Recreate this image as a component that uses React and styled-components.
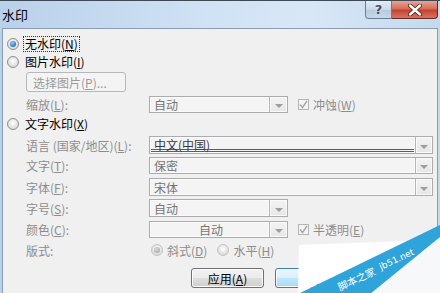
import React from 'react'
import styled, { createGlobalStyle } from 'styled-components'

const Global = createGlobalStyle`
  html, body { margin: 0; padding: 0; background: #ffffff; }
  body { font-family: "Noto Sans CJK SC", "Noto Sans", sans-serif; }
`

const Window = styled.div`
  position: relative;
  width: 440px;
  height: 293px;
  overflow: hidden;
  box-sizing: border-box;
  display: flex;
  flex-direction: column;
  border-top: 1px solid #3c4a58;
  background: linear-gradient(to right, #b9d1ea 0%, #cfe1f3 45%, #d8e7f5 70%, #c4d9ee 100%);
`

const TitleBar = styled.div`
  height: 27px;
  display: flex;
  align-items: flex-start;
  padding-left: 2px;
`

const Title = styled.span`
  margin-top: 6px;
  font-size: 13px;
  line-height: 15px;
  color: #000;
`

const Caption = styled.div`
  margin-left: auto;
  margin-right: 2px;
  display: flex;
`

const HelpButton = styled.div`
  width: 27px;
  height: 18px;
  box-sizing: border-box;
  border: 1px solid #6c7d90;
  border-top: none;
  border-radius: 0 0 0 4px;
  background: linear-gradient(#e4edf6, #c9d9e8 50%, #b6cadd 51%, #c7d8e8);
  display: flex;
  align-items: center;
  justify-content: center;
  font: bold 13px "DejaVu Sans", sans-serif;
  color: #3d4f63;
  text-shadow: 0 0 2px #fff;
`

const CloseButton = styled.div`
  width: 46px;
  height: 18px;
  box-sizing: border-box;
  border: 1px solid #5e2b22;
  border-top: none;
  border-left: none;
  border-radius: 0 0 4px 0;
  background: linear-gradient(#e8a593, #d46a56 48%, #c2412d 52%, #d9735f);
  display: flex;
  align-items: center;
  justify-content: center;
`

const Client = styled.div`
  flex: 1;
  margin: 0 2px;
  box-sizing: border-box;
  background: #f0f0f0;
  border: 1px solid #8b9cb0;
  border-bottom: none;
  padding: 7px 0 0 4px;
  display: flex;
  flex-direction: column;
  font-size: 12px;
  color: #000;
`

const RadioLine = styled.div`
  display: flex;
  align-items: center;
  height: 16px;
  margin-top: ${p => p.$mt || 0}px;
`

const Radio = styled.span`
  width: 12px;
  height: 12px;
  box-sizing: border-box;
  border-radius: 50%;
  border: 1px solid ${p => (p.$disabled ? '#c4c4c4' : '#8e8f8f')};
  background: radial-gradient(circle at 50% 40%, #ffffff, #dcdcdc 70%, #e9e9e9);
  margin-right: 4px;
  display: flex;
  align-items: center;
  justify-content: center;
  flex-shrink: 0;
  &::after {
    content: '';
    display: ${p => (p.$checked ? 'block' : 'none')};
    width: 6px;
    height: 6px;
    border-radius: 50%;
    background: ${p =>
      p.$disabled
        ? 'radial-gradient(circle at 40% 35%, #dcdcdc, #9a9a9a)'
        : 'radial-gradient(circle at 40% 35%, #8fd0f5, #1d69b1 80%)'};
  }
`

const Label = styled.span`
  color: ${p => (p.$disabled ? '#8d8d8d' : '#000')};
  line-height: 14px;
  white-space: nowrap;
  padding: 0 1px;
  border: 1px ${p => (p.$focus ? 'dotted #333' : 'solid transparent')};
`

const PushButton = styled.div`
  margin-top: ${p => p.$mt || 0}px;
  margin-left: ${p => p.$ml || 0}px;
  width: ${p => p.$w}px;
  height: ${p => p.$h || 20}px;
  box-sizing: border-box;
  border: 1px solid ${p => (p.$default ? '#3c7fb1' : p.$disabled ? '#b8b8b8' : '#707070')};
  border-radius: 3px;
  background: ${p =>
    p.$disabled
      ? '#f4f4f4'
      : p.$default
      ? 'linear-gradient(#eaf6fd, #d9f0fc 50%, #bee6fd 51%, #a7d9f5)'
      : 'linear-gradient(#f2f2f2, #ebebeb 50%, #dddddd 51%, #cfcfcf)'};
  box-shadow: inset 0 0 0 1px ${p => (p.$disabled ? '#f4f4f4' : '#fcfcfc')};
  display: flex;
  align-items: center;
  justify-content: ${p => (p.$left ? 'flex-start' : 'center')};
  padding-left: ${p => (p.$left ? 6 : 0)}px;
  color: ${p => (p.$disabled ? '#9a9a9a' : '#000')};
  white-space: nowrap;
  flex-shrink: 0;
`

const FieldRow = styled.div`
  display: flex;
  align-items: center;
  height: ${p => p.$h || 17}px;
  margin-top: ${p => p.$mt || 0}px;
  padding-left: 19px;
`

const FieldLabel = styled.span`
  width: 123px;
  flex-shrink: 0;
  color: #8d8d8d;
  white-space: nowrap;
`

const Combo = styled.div`
  width: ${p => p.$w}px;
  height: 100%;
  box-sizing: border-box;
  border: 1px solid #acacac;
  display: flex;
  flex-shrink: 0;
  background: #f4f4f4;
`

const ComboText = styled.div`
  flex: 1;
  box-sizing: border-box;
  border: 1px solid #fbfbfb;
  display: flex;
  align-items: ${p => (p.$underline ? 'flex-start' : 'center')};
  justify-content: ${p => (p.$center ? 'center' : 'flex-start')};
  padding-left: 3px;
  line-height: 13px;
  color: ${p => (p.$dark ? '#3a3a3a' : '#747474')};
  white-space: nowrap;
  box-shadow: ${p =>
    p.$underline ? 'inset 0 -1px 0 #5e5e5e, inset 0 -2px 0 #f4f4f4, inset 0 -3px 0 #5e5e5e' : 'none'};
`

const DropButton = styled.div`
  width: ${p => p.$w || 17}px;
  flex-shrink: 0;
  box-sizing: border-box;
  border-left: 1px solid #b4b4b4;
  background: linear-gradient(#f3f3f3, #e6e6e6);
  box-shadow: inset 0 0 0 1px #fafafa;
  display: flex;
  align-items: center;
  justify-content: center;
  &::after {
    content: '';
    margin-top: 3px;
    border-left: 4px solid transparent;
    border-right: 4px solid transparent;
    border-top: 4px solid #9c9c9c;
  }
`

const CheckItem = styled.div`
  display: flex;
  align-items: center;
  margin-left: 10px;
  color: #8d8d8d;
  white-space: nowrap;
`

const CheckBox = styled.span`
  width: 11px;
  height: 11px;
  box-sizing: border-box;
  border: 1px solid #b5b5b5;
  background: #f4f4f4;
  margin-right: 4px;
  display: flex;
  align-items: center;
  justify-content: center;
`

const StyleRow = styled.div`
  display: flex;
  align-items: center;
  height: 16px;
  margin-top: ${p => p.$mt || 0}px;
  padding-left: 19px;
`

const StyleOption = styled.div`
  display: flex;
  align-items: center;
  margin-left: ${p => p.$ml || 0}px;
  color: #8d8d8d;
  white-space: nowrap;
`

const ButtonRow = styled.div`
  display: flex;
  margin-top: 10px;
  padding-left: 184px;
  gap: 11px;
`

const Stamp = styled.svg`
  position: absolute;
  left: 280px;
  top: 215px;
`

const Check = () => (
  <svg width="9" height="9" viewBox="0 0 9 9">
    <path d="M1 4.5 L3.5 7.5 L8 1" fill="none" stroke="#a8a8a8" strokeWidth="1.4" />
  </svg>
)

const Cross = () => (
  <svg width="14" height="12" viewBox="0 0 14 12">
    <path d="M2 1.5 L12 10.5 M12 1.5 L2 10.5" stroke="#4a1c14" strokeWidth="4" strokeLinecap="round" />
    <path d="M2 1.5 L12 10.5 M12 1.5 L2 10.5" stroke="#ffffff" strokeWidth="2.4" strokeLinecap="round" />
  </svg>
)

const Key = ({ k }) => (
  <>(<u>{k}</u>)</>
)

export default function App() {
  return (
    <>
      <Global />
      <Window>
        <TitleBar>
          <Title>水印</Title>
          <Caption>
            <HelpButton>?</HelpButton>
            <CloseButton><Cross /></CloseButton>
          </Caption>
        </TitleBar>
        <Client>
          <RadioLine>
            <Radio $checked />
            <Label $focus>无水印<Key k="N" /></Label>
          </RadioLine>
          <RadioLine $mt={2}>
            <Radio />
            <Label>图片水印<Key k="I" /></Label>
          </RadioLine>
          <PushButton $mt={2} $ml={19} $w={100} $disabled $left>
            选择图片(<u>P</u>)...
          </PushButton>
          <FieldRow $mt={4}>
            <FieldLabel>缩放<Key k="L" />:</FieldLabel>
            <Combo $w={139}>
              <ComboText>自动</ComboText>
              <DropButton $w={18} />
            </Combo>
            <CheckItem>
              <CheckBox><Check /></CheckBox>
              冲蚀<Key k="W" />
            </CheckItem>
          </FieldRow>
          <RadioLine $mt={3}>
            <Radio />
            <Label>文字水印<Key k="X" /></Label>
          </RadioLine>
          <FieldRow $mt={4} $h={18}>
            <FieldLabel>语言 (国家/地区)<Key k="L" />:</FieldLabel>
            <Combo $w={284}>
              <ComboText $dark $underline>中文(中国)</ComboText>
              <DropButton />
            </Combo>
          </FieldRow>
          <FieldRow $mt={3}>
            <FieldLabel>文字<Key k="T" />:</FieldLabel>
            <Combo $w={284}>
              <ComboText>保密</ComboText>
              <DropButton />
            </Combo>
          </FieldRow>
          <FieldRow $mt={4} $h={18}>
            <FieldLabel>字体<Key k="F" />:</FieldLabel>
            <Combo $w={284}>
              <ComboText>宋体</ComboText>
              <DropButton />
            </Combo>
          </FieldRow>
          <FieldRow $mt={3} $h={18}>
            <FieldLabel>字号<Key k="S" />:</FieldLabel>
            <Combo $w={139}>
              <ComboText>自动</ComboText>
              <DropButton $w={18} />
            </Combo>
          </FieldRow>
          <FieldRow $mt={4}>
            <FieldLabel>颜色<Key k="C" />:</FieldLabel>
            <Combo $w={139}>
              <ComboText $center>自动</ComboText>
              <DropButton $w={18} />
            </Combo>
            <CheckItem>
              <CheckBox><Check /></CheckBox>
              半透明<Key k="E" />
            </CheckItem>
          </FieldRow>
          <StyleRow $mt={4}>
            <FieldLabel>版式:</FieldLabel>
            <StyleOption $ml={2}>
              <Radio $checked $disabled />
              斜式<Key k="D" />
            </StyleOption>
            <StyleOption $ml={10}>
              <Radio $disabled />
              水平<Key k="H" />
            </StyleOption>
          </StyleRow>
          <ButtonRow>
            <PushButton $w={73}>应用(<u>A</u>)</PushButton>
            <PushButton $w={73} $default>确定</PushButton>
          </ButtonRow>
        </Client>
        <Stamp width="160" height="78" viewBox="0 0 160 78">
          <polygon points="19,29 127,25 18,78" fill="#ffffff" />
          <polygon points="160,21 160,78 90,78" fill="#f6f8fa" />
          <polygon points="160,9 160,21 90,78 18,78" fill="#2fa4da" />
          <text
            x="60"
            y="75"
            transform="rotate(-25 60 75)"
            fill="#ffffff"
            fontSize="10"
            fontFamily="Noto Sans CJK SC, sans-serif"
          >
            脚本之家
          </text>
          <text
            x="101"
            y="54"
            transform="rotate(-25 101 54)"
            fill="#ffffff"
            fontSize="9"
            fontFamily="DejaVu Sans, sans-serif"
          >
            jb51.net
          </text>
        </Stamp>
      </Window>
    </>
  )
}
